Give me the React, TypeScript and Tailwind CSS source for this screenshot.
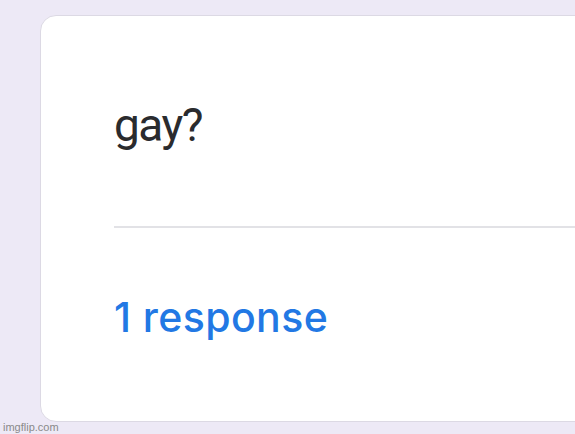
import React from 'react';

export default function App() {
  return (
    <div className="relative h-[434px] w-[575px] overflow-hidden bg-[#ede9f6]">
      {/* Response summary card, cut off on the right */}
      <div className="ml-[40px] mt-[15px] flex h-[407px] w-[560px] flex-col rounded-[16px] border border-[#dcd9e4] bg-white pl-[73px]">
        <div
          className="mt-[86px] text-[46px] leading-none text-[#2a2b2e] tracking-[-1.5px]"
          style={{ fontFamily: 'Roboto, "Liberation Sans", sans-serif' }}
        >
          gay?
        </div>
        <div className="mt-[78px] h-[2px] bg-[#e2e2e6]" />
        <div
          className="mt-[69px] text-[41px] font-medium leading-none text-[#2278e4] tracking-[0.4px]"
          style={{ fontFamily: 'Inter, "Open Sans", sans-serif' }}
        >
          1 response
        </div>
      </div>
      <div
        className="absolute bottom-[1px] left-[3px] text-[11px] leading-none text-[#8a8a8a]"
        style={{ fontFamily: '"Liberation Sans", Arial, sans-serif' }}
      >
        imgflip.com
      </div>
    </div>
  );
}
